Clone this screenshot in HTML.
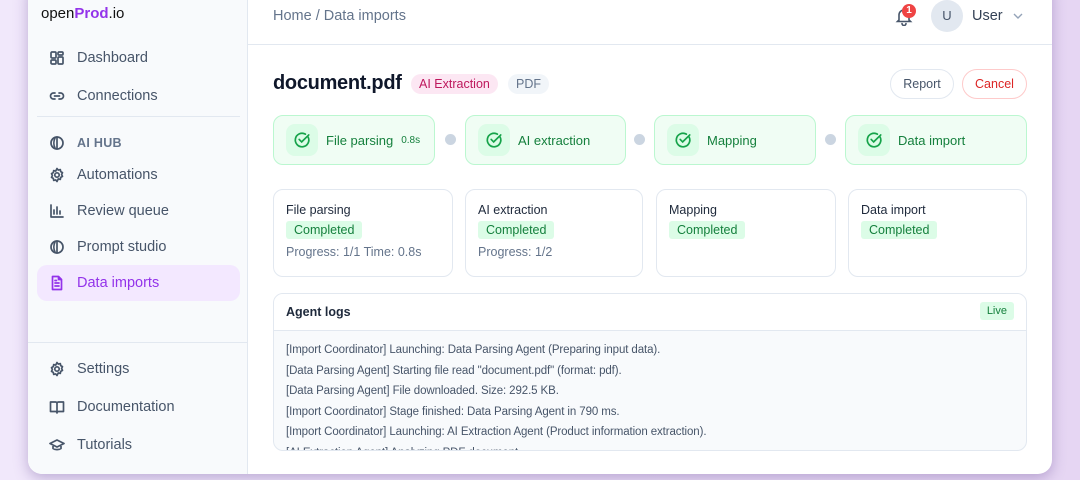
<!DOCTYPE html>
<html><head><meta charset="utf-8"><style>
*{box-sizing:border-box;margin:0;padding:0}
body{width:1080px;height:480px;overflow:hidden;font-family:"Liberation Sans",sans-serif;background:linear-gradient(90deg,#f1e8fb 0%,#e6d6f3 100%);position:relative}
.win{position:absolute;left:28px;top:-20px;width:1024px;height:494px;background:#fff;border-radius:14px;box-shadow:0 4px 14px rgba(90,60,140,.35);overflow:hidden}
.side{position:absolute;left:0;top:0;width:220px;height:100%;background:#f8fafc;border-right:1px solid #e2e8f0}
.logo{position:absolute;left:13px;top:25px;font-size:15px;color:#111}
.logo b{color:#9333ea;font-weight:600}
.it{position:absolute;left:9px;width:203px;height:36px;display:flex;align-items:center;padding-left:12px;font-size:14.5px;color:#475569}
.it svg{width:16px;height:16px;margin-right:12px;stroke:#475569;fill:none;stroke-width:1.7;stroke-linecap:round;stroke-linejoin:round}
.it.act{background:#f3e8ff;color:#9333ea;border-radius:10px}
.it.act svg{stroke:#9333ea}
.hub{font-size:12.5px;font-weight:700;letter-spacing:.3px;color:#64748b}
.hr{position:absolute;height:1px;background:#e2e8f0}
.main{position:absolute;left:220px;top:20px;right:0;bottom:0}
.ct{position:absolute;left:0;top:20px;right:0;bottom:0}
.abs{position:absolute}
.tag{position:absolute;height:20px;border-radius:10px;font-size:12.5px;line-height:20px;padding:0 8px}
.btn{position:absolute;height:30px;border-radius:15px;font-size:12.5px;line-height:28px;text-align:center;background:#fff}
.step{position:absolute;top:95px;height:50px;border:1px solid #bbf7d0;background:#f0fdf4;border-radius:10px;display:flex;align-items:center;padding-left:12px;font-size:13px;color:#15803d}
.step .ic{width:32px;height:32px;border-radius:9px;background:#dcfce7;display:flex;align-items:center;justify-content:center;margin-right:8px}
.step small{font-size:10px;margin-left:8px}
.dot{position:absolute;top:114px;width:11px;height:11px;border-radius:50%;background:#cbd5e1}
.card{position:absolute;top:169px;height:88px;border:1px solid #e2e8f0;border-radius:10px;padding:13px 12px;font-size:12.5px;color:#1e293b}
.card .c{display:inline-block;background:#dcfce7;color:#15803d;font-size:12.5px;padding:2px 8px;border-radius:3px;margin-top:4px}
.card .p{color:#64748b;margin-top:6px;font-size:12.5px}
.logs{position:absolute;left:25px;top:273px;width:754px;height:158px;border:1px solid #e2e8f0;border-radius:10px;background:#f8fafc;overflow:hidden}
.lh{height:37px;background:#fff;border-bottom:1px solid #e2e8f0;font-size:12.5px;font-weight:700;color:#1e293b;padding:11px 12px;position:relative}
.live{position:absolute;right:12px;top:8px;background:#dcfce7;color:#15803d;font-size:11px;font-weight:400;padding:3px 7px;border-radius:3px}
.ll{font-size:11.5px;color:#475569;padding:9px 12px 0;line-height:20.5px;letter-spacing:-.1px}
</style></head><body>
<div class="win">
<div class="side">
<div class="logo">open<b>Prod</b>.io</div>
<div class="it" style="top:60px"><svg viewBox="0 0 16 16"><rect x="2" y="2" width="5" height="6" rx="1"/><rect x="9" y="2" width="5" height="3" rx="1"/><rect x="9" y="7" width="5" height="7" rx="1"/><rect x="2" y="10" width="5" height="4" rx="1"/></svg>Dashboard</div>
<div class="it" style="top:98px"><svg viewBox="0 0 16 16"><path d="M6 5H4.5a3 3 0 0 0 0 6H6M10 5h1.5a3 3 0 0 1 0 6H10M5.5 8h5"/></svg>Connections</div>
<div class="hr" style="left:9px;width:203px;top:136px"></div>
<div class="it hub" style="top:145px"><svg viewBox="0 0 16 16"><circle cx="8" cy="8" r="6"/><path d="M8 2v12M6 3c-1.5 3-1.5 7 0 10"/></svg>AI HUB</div>
<div class="it" style="top:177px"><svg viewBox="0 0 16 16"><circle cx="8" cy="8" r="2.2"/><path d="M8 1.5l1.3 1.6 2-.5.4 2 1.8 1-.9 1.9.9 1.9-1.8 1-.4 2-2-.5L8 14.5l-1.3-1.6-2 .5-.4-2-1.8-1 .9-1.9-.9-1.9 1.8-1 .4-2 2 .5z"/></svg>Automations</div>
<div class="it" style="top:213px"><svg viewBox="0 0 16 16"><path d="M2 2v12h12M5 11V7M8 11V4M11 11V8"/></svg>Review queue</div>
<div class="it" style="top:249px"><svg viewBox="0 0 16 16"><circle cx="8" cy="8" r="6"/><path d="M8 2v12M6 3c-1.5 3-1.5 7 0 10"/></svg>Prompt studio</div>
<div class="it act" style="top:285px"><svg viewBox="0 0 16 16"><path d="M3.5 1.5h6l3 3v10h-9zM9.5 1.5v3h3M6 8h4M6 11h4M6 5.5h1.5"/></svg>Data imports</div>
<div class="hr" style="left:0;width:220px;top:362px"></div>
<div class="it" style="top:371px"><svg viewBox="0 0 16 16"><circle cx="8" cy="8" r="2.2"/><path d="M8 1.5l1.3 1.6 2-.5.4 2 1.8 1-.9 1.9.9 1.9-1.8 1-.4 2-2-.5L8 14.5l-1.3-1.6-2 .5-.4-2-1.8-1 .9-1.9-.9-1.9 1.8-1 .4-2 2 .5z"/></svg>Settings</div>
<div class="it" style="top:409px"><svg viewBox="0 0 16 16"><path d="M1.5 3h5a1.5 1.5 0 0 1 1.5 1.5V14a1.5 1.5 0 0 0-1.5-1.5h-5zM14.5 3h-5A1.5 1.5 0 0 0 8 4.5V14a1.5 1.5 0 0 1 1.5-1.5h5z"/></svg>Documentation</div>
<div class="it" style="top:447px"><svg viewBox="0 0 16 16"><path d="M1 6.5L8 3l7 3.5L8 10zM4 8v3.5c2 1.5 6 1.5 8 0V8"/></svg>Tutorials</div>
</div>
<div class="main">
<div class="hr" style="left:0;right:0;top:44px"></div>
<div class="abs" style="left:25px;top:8px;font-size:14.5px;color:#64748b">Home / Data imports</div>
<svg class="abs" style="left:646px;top:6px" width="20" height="20" viewBox="0 0 20 20" fill="none" stroke="#475569" stroke-width="1.6" stroke-linecap="round"><path d="M5 14V9a5 5 0 0 1 10 0v5l1.5 1.5h-13zM8 17.5a2 2 0 0 0 4 0"/></svg>
<div class="abs" style="left:654px;top:4px;width:14px;height:14px;border-radius:50%;background:#ef4444;color:#fff;font-size:10px;font-weight:700;text-align:center;line-height:14px">1</div>
<div class="abs" style="left:683px;top:0;width:32px;height:32px;border-radius:50%;background:#e2e8f0;color:#475569;font-size:13px;text-align:center;line-height:32px">U</div>
<div class="abs" style="left:724px;top:8px;font-size:14.5px;color:#334155">User</div>
<svg class="abs" style="left:764px;top:11px" width="12" height="10" viewBox="0 0 12 10" fill="none" stroke="#94a3b8" stroke-width="1.4"><path d="M2 3l4 4 4-4"/></svg>
<div class="ct">
<div class="abs" style="left:25px;top:52px;font-size:20px;font-weight:700;color:#0f172a;letter-spacing:-.3px">document.pdf</div>
<div class="tag" style="left:163px;top:54px;background:#fce7f3;color:#be185d">AI Extraction</div>
<div class="tag" style="left:260px;top:54px;background:#f1f5f9;color:#64748b">PDF</div>
<div class="btn" style="left:642px;top:49px;width:64px;border:1px solid #e2e8f0;color:#475569">Report</div>
<div class="btn" style="left:714px;top:49px;width:65px;border:1px solid #fecaca;color:#dc2626">Cancel</div>
<div class="step" style="left:25px;width:162px"><div class="ic"><svg width="18" height="18" viewBox="0 0 16 16" stroke="#16a34a" stroke-width="1.5" stroke-linecap="round"><path d="M13.5 5.5A6 6 0 1 1 11 2.8" fill="none"/><path d="M5.5 7.5l2.2 2.2L14 3.5" fill="none"/></svg></div>File parsing<small>0.8s</small></div>
<div class="dot" style="left:197px"></div>
<div class="step" style="left:217px;width:161px"><div class="ic"><svg width="18" height="18" viewBox="0 0 16 16" stroke="#16a34a" stroke-width="1.5" stroke-linecap="round"><path d="M13.5 5.5A6 6 0 1 1 11 2.8" fill="none"/><path d="M5.5 7.5l2.2 2.2L14 3.5" fill="none"/></svg></div>AI extraction</div>
<div class="dot" style="left:386px"></div>
<div class="step" style="left:406px;width:162px"><div class="ic"><svg width="18" height="18" viewBox="0 0 16 16" stroke="#16a34a" stroke-width="1.5" stroke-linecap="round"><path d="M13.5 5.5A6 6 0 1 1 11 2.8" fill="none"/><path d="M5.5 7.5l2.2 2.2L14 3.5" fill="none"/></svg></div>Mapping</div>
<div class="dot" style="left:577px"></div>
<div class="step" style="left:597px;width:182px"><div class="ic"><svg width="18" height="18" viewBox="0 0 16 16" stroke="#16a34a" stroke-width="1.5" stroke-linecap="round"><path d="M13.5 5.5A6 6 0 1 1 11 2.8" fill="none"/><path d="M5.5 7.5l2.2 2.2L14 3.5" fill="none"/></svg></div>Data import</div>
<div class="card" style="left:25px;width:180px">File parsing<br><span class="c">Completed</span><div class="p">Progress: 1/1 Time: 0.8s</div></div>
<div class="card" style="left:217px;width:178px">AI extraction<br><span class="c">Completed</span><div class="p">Progress: 1/2</div></div>
<div class="card" style="left:408px;width:180px">Mapping<br><span class="c">Completed</span></div>
<div class="card" style="left:600px;width:179px">Data import<br><span class="c">Completed</span></div>
<div class="logs"><div class="lh">Agent logs<span class="live">Live</span></div>
<div class="ll">[Import Coordinator] Launching: Data Parsing Agent (Preparing input data).<br>[Data Parsing Agent] Starting file read "document.pdf" (format: pdf).<br>[Data Parsing Agent] File downloaded. Size: 292.5 KB.<br>[Import Coordinator] Stage finished: Data Parsing Agent in 790 ms.<br>[Import Coordinator] Launching: AI Extraction Agent (Product information extraction).<br>[AI Extraction Agent] Analyzing PDF document...</div></div>
</div>
</div>
</div>
</body></html>
